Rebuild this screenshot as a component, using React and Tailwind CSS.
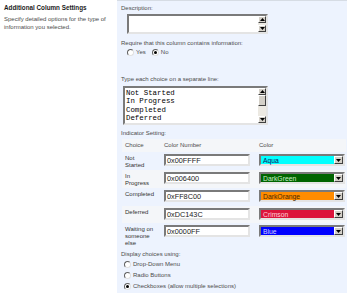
import React from 'react';

const font = { fontFamily: '"Liberation Sans", Arial, sans-serif' };

const rows = [
  { choice: ['Not', 'Started'], num: '0x00FFFF', name: 'Aqua', bg: 'bg-[#00ffff]', fg: 'text-[#101060]', h: 'h-[18px]', light: false },
  { choice: ['In', 'Progress'], num: '0x006400', name: 'DarkGreen', bg: 'bg-[#006400]', fg: 'text-[#c8f0c8]', h: 'h-[18px]', light: true },
  { choice: ['Completed'], num: '0xFF8C00', name: 'DarkOrange', bg: 'bg-[#ff8c00]', fg: 'text-[#4a2a00]', h: 'h-[18px]', light: false },
  { choice: ['Deferred'], num: '0xDC143C', name: 'Crimson', bg: 'bg-[#dc143c]', fg: 'text-[#ffd0d8]', h: 'h-[17px]', light: true },
  { choice: ['Waiting on', 'someone', 'else'], num: '0x0000FF', name: 'Blue', bg: 'bg-[#0000ff]', fg: 'text-[#d0d0ff]', h: 'h-[26px]', light: false },
];

// little windows-classic scroll arrow button
const ArrowBtn = ({ dir }) => (
  <div className="w-[8px] h-[7px] bg-[#d4d0c8] border border-t-white border-l-white border-b-[#404040] border-r-[#404040] flex items-center justify-center">
    <svg width="5" height="3" viewBox="0 0 5 3">
      {dir === 'up' ? <path d="M0 3h5L2.5 0z" fill="#000" /> : <path d="M0 0h5L2.5 3z" fill="#000" />}
    </svg>
  </div>
);

const Radio = ({ checked }) => (
  <span className="inline-flex w-[7px] h-[7px] rounded-full bg-white border border-t-[#606060] border-l-[#606060] border-b-[#e0e0e0] border-r-[#e0e0e0] items-center justify-center shrink-0">
    {checked && <span className="w-[3px] h-[3px] rounded-full bg-black" />}
  </span>
);

const Inset = ({ className, children }) => (
  <div className={`border-2 border-t-[#7a7a7a] border-l-[#7a7a7a] border-b-[#e4e4e4] border-r-[#e4e4e4] ${className}`}>{children}</div>
);

export default function App() {
  return (
    <div className="w-[350px] h-[293px] bg-white flex overflow-hidden text-[6px] leading-[7px] text-[#4c4c4c]" style={font}>
      {/* left description column */}
      <div className="w-[117px] shrink-0 pl-[4px] pt-[4px]">
        <div className="font-bold text-[#1a1a1a] text-[6.3px] leading-[8px]">Additional Column Settings</div>
        <div className="mt-[3px] leading-[8px]">Specify detailed options for the type of information you selected.</div>
      </div>

      {/* right authoring panel */}
      <div className="w-[230px] bg-[#edf3fe] border-t border-[#d6dce4] pl-[4px] pt-[4px] flex flex-col">
        <div>Description:</div>
        <Inset className="ml-[6px] mt-[2px] w-[141px] h-[20px] bg-white flex justify-end">
          <div className="w-[8px] h-full bg-[#ece9e2] flex flex-col justify-between">
            <ArrowBtn dir="up" />
            <ArrowBtn dir="down" />
          </div>
        </Inset>

        <div className="mt-[6px]">Require that this column contains information:</div>
        <div className="mt-[2px] ml-[6px] flex items-center gap-[2px]">
          <Radio />
          <span className="mr-[4px]">Yes</span>
          <Radio checked />
          <span>No</span>
        </div>

        <div className="mt-[20px]">Type each choice on a separate line:</div>
        <Inset className="ml-[2px] mt-[3px] w-[145px] h-[39px] bg-white flex">
          <div className="flex-1 pl-[1px] pt-[1px] text-[7.4px] leading-[8.4px] text-black" style={{ fontFamily: '"Liberation Mono", "Courier New", monospace' }}>
            <div>Not Started</div>
            <div>In Progress</div>
            <div>Completed</div>
            <div>Deferred</div>
          </div>
          <div className="w-[8px] h-full bg-[#ece9e2] flex flex-col">
            <ArrowBtn dir="up" />
            <div className="w-[8px] h-[11px] bg-[#d4d0c8] border border-t-white border-l-white border-b-[#404040] border-r-[#404040]" />
            <div className="flex-1" />
            <ArrowBtn dir="down" />
          </div>
        </Inset>

        <div className="mt-[5px]">Indicator Setting:</div>
        <div className="mt-[2px] ml-[1px] w-[224px] flex flex-col">
          <div className="h-[13px] bg-[#f4f6f9] flex items-center">
            <span className="w-[42px] pl-[3px]">Choice</span>
            <span className="w-[95px]">Color Number</span>
            <span>Color</span>
          </div>
          {rows.map((r) => (
            <div key={r.num} className={`${r.h} ${r.light ? 'bg-[#f4f6f9]' : ''} flex items-start pt-[2px]`}>
              <div className="w-[42px] pl-[3px] pt-[1px] text-[#333]">
                {r.choice.map((c) => (
                  <div key={c}>{c}</div>
                ))}
              </div>
              <Inset className="w-[86px] h-[12px] bg-white flex items-center pl-[1px] text-[7.3px] text-[#222]">{r.num}</Inset>
              <Inset className="ml-[9px] w-[86px] h-[12px] flex">
                <div className={`flex-1 ${r.bg} ${r.fg} pl-[2px] text-[6.8px] leading-[7px] flex items-center`}>{r.name}</div>
                <div className="w-[9px] bg-[#d4d0c8] border border-t-white border-l-white border-b-[#404040] border-r-[#404040] flex items-center justify-center">
                  <svg width="5" height="3" viewBox="0 0 5 3"><path d="M0 0h5L2.5 3z" fill="#000" /></svg>
                </div>
              </Inset>
            </div>
          ))}
        </div>

        <div className="mt-[2px]">Display choices using:</div>
        <div className="mt-[1px] ml-[3px] flex flex-col">
          <div className="h-[11px] flex items-center gap-[2px]"><Radio /><span>Drop-Down Menu</span></div>
          <div className="h-[11px] flex items-center gap-[2px]"><Radio /><span>Radio Buttons</span></div>
          <div className="h-[11px] flex items-center gap-[2px]"><Radio checked /><span>Checkboxes (allow multiple selections)</span></div>
        </div>
      </div>
    </div>
  );
}
